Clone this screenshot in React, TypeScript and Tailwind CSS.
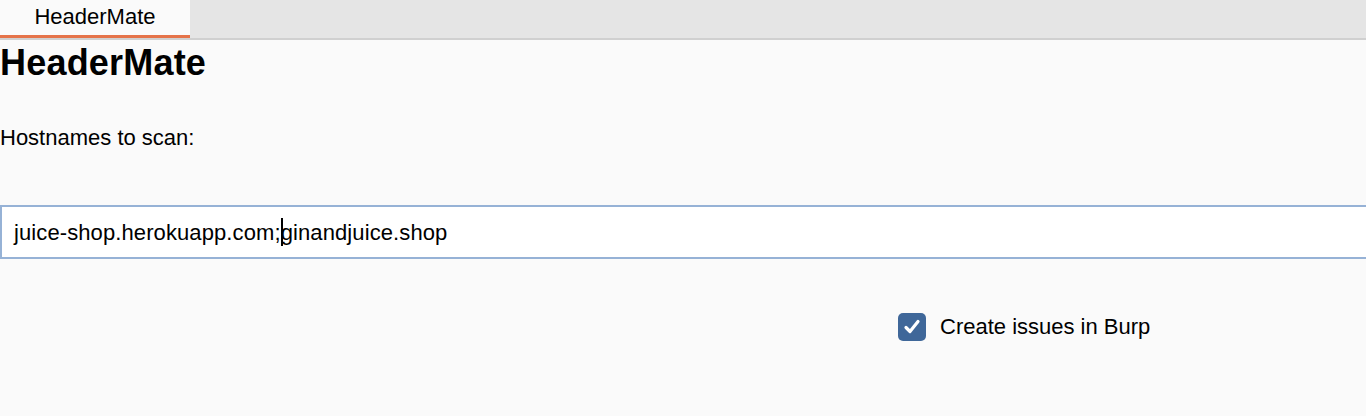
import React from "react";

export default function App() {
  return (
    <div className="w-[1366px] h-[416px] bg-[#fafafa] overflow-hidden text-black" style={{ fontFamily: '"Liberation Sans", Arial, sans-serif' }}>
      <div className="h-[40px] bg-[#e5e5e5] border-b-2 border-[#d0d0d0] flex">
        <div className="w-[190px] h-[38px] bg-[#fafafa] border-b-[3px] border-[#e5734a] flex items-start justify-center pt-[4px] text-[22px] leading-[26px]">
          HeaderMate
        </div>
      </div>
      <div className="text-[36px] leading-[40px] font-bold pt-[3px] tracking-[0.2px]">HeaderMate</div>
      <div className="text-[22px] leading-[26px] mt-[42px]">Hostnames to scan:</div>
      <div className="mt-[54px] h-[54px] bg-white border-2 border-[#96b2d6] border-r-0 flex items-center pl-[12px] text-[22px] tracking-[0.1px] w-[1368px]">
        <span>juice-shop.herokuapp.com;</span>
        <span className="inline-block w-[2px] h-[28px] bg-black -mr-[2px]"></span>
        <span>ginandjuice.shop</span>
      </div>
      <div className="flex items-center mt-[54px] ml-[898px]">
        <div className="w-[28px] h-[28px] rounded-[5px] bg-[#3f6799] flex items-center justify-center">
          <svg width="20" height="20" viewBox="0 0 20 20">
            <path d="M4 10.5 L8 14.5 L16 4.5" stroke="white" strokeWidth="3.2" fill="none" strokeLinecap="round" strokeLinejoin="round" />
          </svg>
        </div>
        <span className="ml-[14px] text-[22px] leading-[26px]">Create issues in Burp</span>
      </div>
    </div>
  );
}
